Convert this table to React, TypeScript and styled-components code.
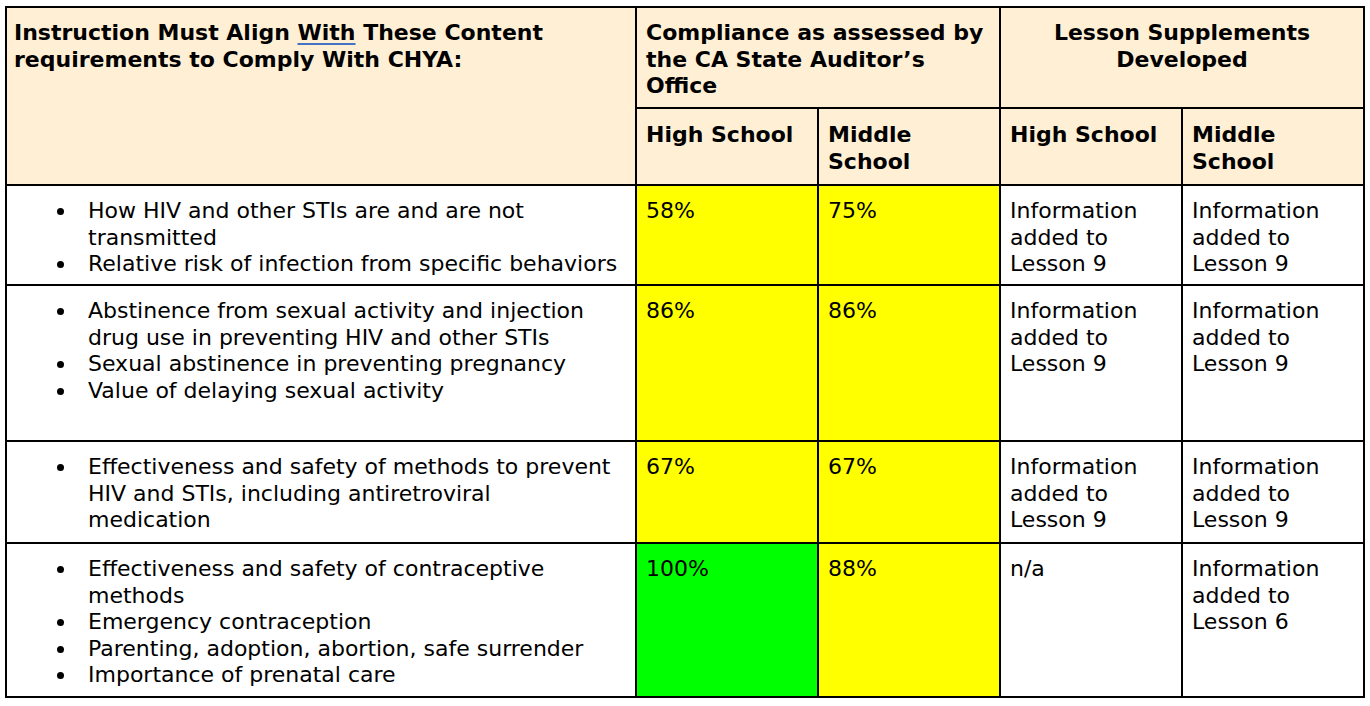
import React from 'react';
import styled, { createGlobalStyle } from 'styled-components';

const GlobalStyle = createGlobalStyle`
  body {
    margin: 0;
    background: #ffffff;
    font-family: "DejaVu Sans", "Liberation Sans", sans-serif;
  }
`;

const Page = styled.div`
  padding: 6px 0 0 5px;
`;

const Table = styled.div`
  display: grid;
  grid-template-columns: 628px repeat(4, 180px);
  grid-template-rows: 99px 75px 98px 154px 100px 152px;
  gap: 2px;
  padding: 2px;
  width: max-content;
  background: #000000;
  color: #000000;
  font-size: 22px;
  line-height: 26.5px;
`;

const Cell = styled.div<{ $bg?: string; $span?: number; $rows?: number; $center?: boolean }>`
  background: ${(p) => p.$bg || '#ffffff'};
  grid-column: span ${(p) => p.$span || 1};
  grid-row: span ${(p) => p.$rows || 1};
  padding: 12px 9px 8px;
  white-space: nowrap;
  overflow: hidden;
  text-align: ${(p) => (p.$center ? 'center' : 'left')};
`;

const HeadCell = styled(Cell)`
  background: #ffefd5;
  font-weight: bold;
`;

const SubHeadCell = styled(HeadCell)`
  padding-top: 13px;
`;

const TitleCell = styled(HeadCell)`
  padding-left: 7px;
`;

const Underlined = styled.span`
  text-decoration: underline;
  text-decoration-color: #4472c4;
  text-decoration-thickness: 2px;
  text-underline-offset: 3px;
`;

const List = styled.ul`
  margin: 0;
  padding: 0 0 0 28px;
  list-style: none;
`;

const Item = styled.li`
  display: grid;
  grid-template-columns: 44px auto;
`;

const Bullet = styled.span`
  display: flex;
  align-items: flex-start;
  padding-top: 10px;
  &::before {
    content: '';
    width: 7px;
    height: 7px;
    border-radius: 50%;
    background: #000000;
    margin-left: 13px;
  }
`;

const YELLOW = '#ffff00';
const GREEN = '#00ff00';

type Row = {
  items: string[][];
  hs: string;
  ms: string;
  hsBg: string;
  msBg: string;
  supHs: string[];
  supMs: string[];
};

const info9 = ['Information', 'added to', 'Lesson 9'];

const rows: Row[] = [
  {
    items: [
      ['How HIV and other STIs are and are not', 'transmitted'],
      ['Relative risk of infection from specific behaviors'],
    ],
    hs: '58%', ms: '75%', hsBg: YELLOW, msBg: YELLOW, supHs: info9, supMs: info9,
  },
  {
    items: [
      ['Abstinence from sexual activity and injection', 'drug use in preventing HIV and other STIs'],
      ['Sexual abstinence in preventing pregnancy'],
      ['Value of delaying sexual activity'],
    ],
    hs: '86%', ms: '86%', hsBg: YELLOW, msBg: YELLOW, supHs: info9, supMs: info9,
  },
  {
    items: [
      ['Effectiveness and safety of methods to prevent', 'HIV and STIs, including antiretroviral', 'medication'],
    ],
    hs: '67%', ms: '67%', hsBg: YELLOW, msBg: YELLOW, supHs: info9, supMs: info9,
  },
  {
    items: [
      ['Effectiveness and safety of contraceptive', 'methods'],
      ['Emergency contraception'],
      ['Parenting, adoption, abortion, safe surrender'],
      ['Importance of prenatal care'],
    ],
    hs: '100%', ms: '88%', hsBg: GREEN, msBg: YELLOW, supHs: ['n/a'], supMs: ['Information', 'added to', 'Lesson 6'],
  },
];

function Lines({ lines }: { lines: string[] }) {
  return (
    <>
      {lines.map((l, i) => (
        <div key={i}>{l}</div>
      ))}
    </>
  );
}

export default function App() {
  return (
    <Page>
      <GlobalStyle />
      <Table>
        <TitleCell $rows={2}>
          <div>
            Instruction Must Align <Underlined>With</Underlined> These Content
          </div>
          <div>requirements to Comply With CHYA:</div>
        </TitleCell>
        <HeadCell $span={2}>
          <Lines lines={['Compliance as assessed by', 'the CA State Auditor’s', 'Office']} />
        </HeadCell>
        <HeadCell $span={2} $center>
          <Lines lines={['Lesson Supplements', 'Developed']} />
        </HeadCell>
        <SubHeadCell>High School</SubHeadCell>
        <SubHeadCell>
          <Lines lines={['Middle', 'School']} />
        </SubHeadCell>
        <SubHeadCell>High School</SubHeadCell>
        <SubHeadCell>
          <Lines lines={['Middle', 'School']} />
        </SubHeadCell>

        {rows.map((r, i) => (
          <React.Fragment key={i}>
            <Cell>
              <List>
                {r.items.map((it, j) => (
                  <Item key={j}>
                    <Bullet />
                    <div>
                      <Lines lines={it} />
                    </div>
                  </Item>
                ))}
              </List>
            </Cell>
            <Cell $bg={r.hsBg}>{r.hs}</Cell>
            <Cell $bg={r.msBg}>{r.ms}</Cell>
            <Cell>
              <Lines lines={r.supHs} />
            </Cell>
            <Cell>
              <Lines lines={r.supMs} />
            </Cell>
          </React.Fragment>
        ))}
      </Table>
    </Page>
  );
}
